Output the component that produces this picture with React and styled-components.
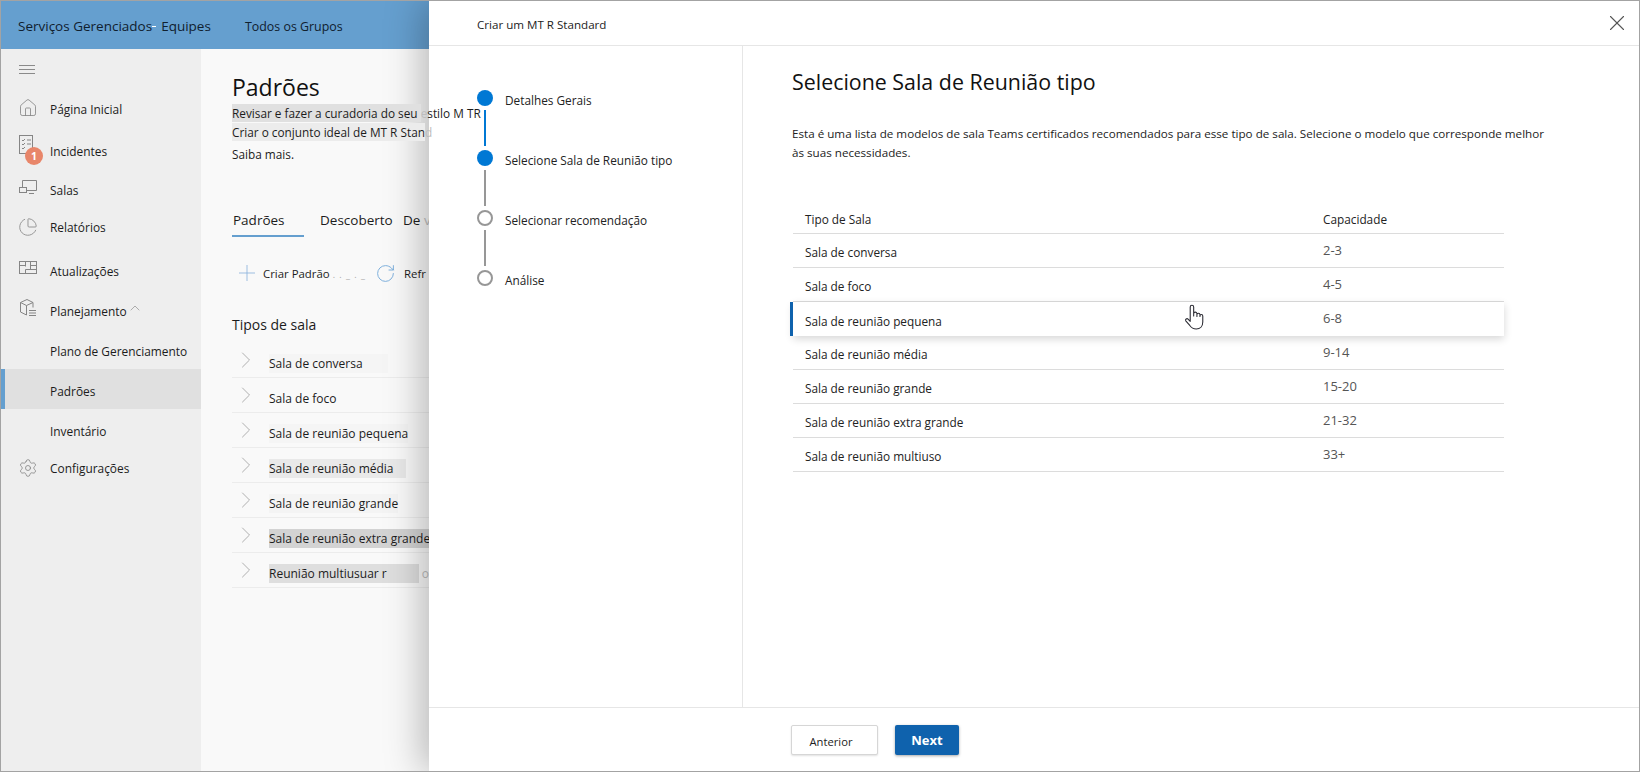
import React from 'react';
import styled, { createGlobalStyle } from 'styled-components';
import { Home, PieChart, Settings, ChevronRight, ChevronUp, Plus, RotateCw, X } from 'lucide-react';

const Global = createGlobalStyle`
    html, body { margin: 0; padding: 0; background: #fff; }
    * { box-sizing: border-box; }
    body { font-family: "Open Sans", "Noto Sans", sans-serif; color: #1c1c1c; }
`;

const Page = styled.div`
    position: relative;
    width: 1640px;
    height: 772px;
    overflow: hidden;
    display: flex;
    flex-direction: column;
    border: 1px solid #a3a3a3;
`;

const TopBar = styled.header`
    flex: 0 0 48px;
    background: #659fcf;
    display: flex;
    align-items: center;
    padding: 2px 0 0 17px;
    color: #10202e;
`;

const Brand = styled.span`
    font-size: 13.5px;
    width: 227px;
    & > i {
        display: inline-block;
        width: 4px;
        height: 1px;
        margin: 0 5px 4px 0;
        background: #fff;
    }
`;

const GroupLink = styled.span`
    font-size: 12.4px;
`;

const Body = styled.div`
    flex: 1;
    display: flex;
    min-height: 0;
`;

const Sidebar = styled.nav`
    flex: 0 0 200px;
    background: #eeeeee;
    display: flex;
    flex-direction: column;
`;

const Hamburger = styled.div`
    height: 40px;
    padding: 16px 0 0 18px;
    & span {
        display: block;
        width: 16px;
        height: 1px;
        margin-bottom: 3px;
        background: #8a8a8a;
    }
`;

const NavRow = styled.div`
    position: relative;
    height: ${ props => props.$sub ? '40px' : '36px' };
    margin-top: ${ props => props.$top || 0 }px;
    display: flex;
    align-items: center;
    padding: 4px 0 0 49px;
    font-size: 11.9px;
    background: ${ props => props.$active ? '#e0e0e0' : 'transparent' };
    border-left: ${ props => props.$active ? '4px solid #659fcf' : 'none' };
    padding-left: ${ props => props.$active ? '45px' : '49px' };
    & > svg.nav-icon {
        position: absolute;
        left: 17px;
        top: ${ props => props.$iconTop ?? 9 }px;
        color: #858585;
    }
`;

const Caret = styled(ChevronUp)`
    margin: -6px 0 0 0;
    color: #8a8a8a;
`;

const Badge = styled.span`
    position: absolute;
    left: 24px;
    top: 16px;
    width: 18px;
    height: 18px;
    border-radius: 50%;
    background: #e8866a;
    color: #fff;
    font-size: 10.5px;
    font-weight: 700;
    display: flex;
    align-items: center;
    justify-content: center;
`;

const Main = styled.main`
    flex: 1;
    background: #f9f9f9;
    padding: 21px 0 0 31px;
    min-width: 0;
`;

const PageTitle = styled.h1`
    margin: 0;
    font-size: 23px;
    font-weight: 400;
    line-height: 34px;
    color: #111;
`;

const Description = styled.p`
    position: relative;
    z-index: 3;
    margin: ${ props => props.$top || 0 }px 0 0;
    font-size: 11.8px;
    line-height: 19px;
    white-space: nowrap;
`;

const Mark = styled.span`
    background: ${ props => props.$tone || 'transparent' };
    padding: ${ props => props.$tone ? '1px' : 0 } ${ props => props.$pad || 0 }px ${ props => props.$tone ? '1px' : 0 } 0;
`;

const Fade = styled.span`
    color: #bdbdbd;
`;

const Tabs = styled.div`
    display: flex;
    margin-top: 44px;
    font-size: 13.5px;
    white-space: nowrap;
`;

const Tab = styled.span`
    height: 29px;
    padding: 3px 0 0 1px;
    width: ${ props => props.$w }px;
`;

const ActiveTab = styled(Tab)`
    border-bottom: 2px solid #659fcf;
    margin-right: 15px;
`;

const Toolbar = styled.div`
    display: flex;
    align-items: center;
    margin-top: 23px;
    padding-left: 2px;
    font-size: 11.4px;
    white-space: nowrap;
    & svg { flex: none; }
`;

const ToolLabel = styled.span`
    margin-left: ${ props => props.$left }px;
    width: ${ props => props.$w }px;
`;

const Dots = styled.span`
    margin-left: 3px;
    letter-spacing: 1px;
    color: #a8a8a8;
    font-size: 9px;
`;

const SectionTitle = styled.h2`
    margin: 29px 0 8px;
    font-size: 14px;
    font-weight: 400;
    line-height: 20px;
`;

const RoomRow = styled.div`
    height: 35px;
    border-bottom: 1px solid #ececec;
    display: flex;
    align-items: center;
    font-size: 12px;
    white-space: nowrap;
    & svg { color: #a9a9a9; flex: none; margin-right: 9px; }
    & > span { margin-top: 6px; }
`;

const Drawer = styled.aside`
    position: absolute;
    z-index: 2;
    left: 428px;
    top: 0;
    right: 0;
    bottom: 0;
    background: #fff;
    display: flex;
    flex-direction: column;
    box-shadow: -6px 0 36px rgba(0, 0, 0, 0.28);
`;

const DrawerHeader = styled.div`
    flex: 0 0 45px;
    border-bottom: 1px solid #e6e6e6;
    display: flex;
    align-items: center;
    justify-content: space-between;
    padding: 3px 9px 0 48px;
    font-size: 11.6px;
    color: #222;
`;

const CloseIcon = styled(X)`
    color: #555;
    margin-top: -4px;
`;

const DrawerBody = styled.div`
    flex: 1;
    display: flex;
    min-height: 0;
`;

const Rail = styled.div`
    flex: 0 0 314px;
    border-right: 1px solid #e6e6e6;
    padding: 44px 0 0 48px;
`;

const Step = styled.div`
    display: flex;
    height: 60px;
    font-size: 11.8px;
    color: #222;
`;

const Marker = styled.div`
    flex: 0 0 16px;
    display: flex;
    flex-direction: column;
    align-items: center;
    margin-right: 12px;
`;

const Dot = styled.span`
    width: 16px;
    height: 16px;
    border-radius: 50%;
    background: ${ props => props.$done ? '#0078d4' : '#fff' };
    border: ${ props => props.$done ? 'none' : '2px solid #979797' };
`;

const Line = styled.span`
    width: 2px;
    height: 36px;
    margin-top: 4px;
    background: ${ props => props.$done ? '#0078d4' : '#979797' };
`;

const StepLabel = styled.span`
    line-height: 18px;
    margin-top: 1px;
`;

const Content = styled.section`
    flex: 1;
    padding: 20px 0 0 49px;
`;

const Heading = styled.h2`
    margin: 0;
    font-size: 21.4px;
    font-weight: 400;
    line-height: 32px;
    color: #111;
`;

const Lead = styled.p`
    margin: 26px 0 0;
    width: 760px;
    font-size: 11.65px;
    line-height: 19px;
    color: #222;
`;

const Table = styled.div`
    margin: 40px 0 0 1px;
    width: 711px;
`;

const TableRow = styled.div`
    position: relative;
    height: 34px;
    display: grid;
    grid-template-columns: 518px 1fr;
    align-items: center;
    padding: 3px 0 0 12px;
    border-bottom: 1px solid #dcdcdc;
    font-size: 11.8px;
    color: #222;
`;

const HeadRow = styled(TableRow)`
    height: 32px;
`;

const SelectedRow = styled(TableRow)`
    border-bottom: none;
    box-shadow: 0 3px 8px rgba(0, 0, 0, 0.16);
    background: #fff;
    &::before {
        content: '';
        position: absolute;
        left: -3px;
        top: 0;
        bottom: 0;
        width: 3px;
        background: #0f62ad;
    }
`;

const Capacity = styled.span`
    font-size: 13px;
    color: #555;
    margin-top: -5px;
`;

const HandCursor = styled.svg`
    position: absolute;
    left: 391px;
    top: 2px;
    color: #2b2b33;
`;

const Footer = styled.div`
    flex: 0 0 64px;
    border-top: 1px solid #e6e6e6;
    display: flex;
    gap: 17px;
    padding: 17px 0 0 362px;
`;

const SecondaryButton = styled.button`
    width: 87px;
    height: 30px;
    background: #fff;
    border: 1px solid #d6d6d6;
    border-radius: 2px;
    box-shadow: 0 1px 2px rgba(0, 0, 0, 0.12);
    font-family: inherit;
    font-size: 11.2px;
    color: #222;
    padding: 3px 7px 0 0;
`;

const PrimaryButton = styled.button`
    width: 64px;
    height: 30px;
    background: #0f62ad;
    border: none;
    border-radius: 2px;
    box-shadow: 0 1px 3px rgba(0, 0, 0, 0.35);
    font-family: inherit;
    font-size: 13px;
    font-weight: 700;
    color: #fff;
`;

const iconProps = { className: 'nav-icon', size: 20, strokeWidth: 1 };

const IncidentsIcon = () => (
    <svg className="nav-icon" width="18" height="22" viewBox="0 0 18 22" fill="none" stroke="currentColor">
        <rect x="1.5" y="1.5" width="13" height="18" />
        <path d="M4 6l1 1 2-2M9 6h4M4 10l1 1 2-2M9 10h4M4 14l1 1 2-2" />
    </svg>
);

const RoomsIcon = () => (
    <svg className="nav-icon" width="20" height="18" viewBox="0 0 20 18" fill="none" stroke="currentColor">
        <path d="M4.5 9V2.5h14v10H9" />
        <rect x="1.5" y="9.5" width="7" height="5" />
        <path d="M11 15.5h5" />
    </svg>
);

const UpdatesIcon = () => (
    <svg className="nav-icon" width="20" height="16" viewBox="0 0 20 16" fill="none" stroke="currentColor">
        <rect x="1.5" y="1.5" width="17" height="12" />
        <path d="M1.5 5.5h6M12.5 5.5h6M7.5 1.5v5M7.5 9.5v4M12.5 1.5v8M7.5 9.5h11" />
    </svg>
);

const PlanningIcon = () => (
    <svg className="nav-icon" width="20" height="20" viewBox="0 0 20 20" fill="none" stroke="currentColor">
        <path d="M2.5 4.5L9 1.5l6 3v5M2.5 4.5v9.5L8.5 17V7.5zM8.5 7.5L15 4.5" />
        <path d="M11 12.5h7M11 15h7M11 17.5h7" />
    </svg>
);

const rooms = [
    { text: 'Sala de conversa', tone: '#f5f5f5', pad: 25 },
    { text: 'Sala de foco' },
    { text: 'Sala de reunião pequena', tone: '#f5f5f5' },
    { text: 'Sala de reunião média', tone: '#e9e9e9', pad: 12 },
    { text: 'Sala de reunião grande', tone: '#f4f4f4' },
    { text: 'Sala de reunião extra grande', tone: '#d3d3d3' },
    { text: 'Reunião multiusuar r', tone: '#dedede', pad: 32, tail: 'o' },
];

const capacities = [
    [ 'Sala de conversa', '2-3' ],
    [ 'Sala de foco', '4-5' ],
    [ 'Sala de reunião pequena', '6-8' ],
    [ 'Sala de reunião média', '9-14' ],
    [ 'Sala de reunião grande', '15-20' ],
    [ 'Sala de reunião extra grande', '21-32' ],
    [ 'Sala de reunião multiuso', '33+' ],
];

const steps = [
    { label: 'Detalhes Gerais', done: true, lineDone: true },
    { label: 'Selecione Sala de Reunião tipo', done: true },
    { label: 'Selecionar recomendação' },
    { label: 'Análise', last: true },
];

function App() {
    return (
        <Page>
            <Global />
            <TopBar>
                <Brand>Serviços Gerenciados<i />Equipes</Brand>
                <GroupLink>Todos os Grupos</GroupLink>
            </TopBar>
            <Body>
                <Sidebar>
                    <Hamburger><span /><span /><span /></Hamburger>
                    <NavRow><Home { ...iconProps } />Página Inicial</NavRow>
                    <NavRow $top={ 6 } $iconTop={ 3 }>
                        <IncidentsIcon />
                        <Badge>1</Badge>
                        Incidentes
                    </NavRow>
                    <NavRow $top={ 3 } $iconTop={ 8 }><RoomsIcon />Salas</NavRow>
                    <NavRow $top={ 1 } $iconTop={ 10 }><PieChart { ...iconProps } />Relatórios</NavRow>
                    <NavRow $top={ 8 } $iconTop={ 9 }><UpdatesIcon />Atualizações</NavRow>
                    <NavRow $top={ 4 } $iconTop={ 7 }>
                        <PlanningIcon />
                        Planejamento
                        <Caret size={ 16 } strokeWidth={ 1 } />
                    </NavRow>
                    <NavRow $sub $top={ 2 }>Plano de Gerenciamento</NavRow>
                    <NavRow $sub $active>Padrões</NavRow>
                    <NavRow $sub>Inventário</NavRow>
                    <NavRow $top={ -1 } $iconTop={ 10 }><Settings { ...iconProps } />Configurações</NavRow>
                </Sidebar>
                <Main>
                    <PageTitle>Padrões</PageTitle>
                    <Description>
                        <Mark $tone="#e0e0e0">Revisar e fazer a curadoria do seu </Mark><Fade>e</Fade>stilo M TR
                    </Description>
                    <Description>
                        <Mark $tone="#ececec">Criar o conjunto ideal de MT R Stan</Mark><Fade>d</Fade>
                    </Description>
                    <Description $top={ 3 }>Saiba mais.</Description>
                    <Tabs>
                        <ActiveTab $w={ 72 }>Padrões</ActiveTab>
                        <Tab $w={ 83 }>Descoberto</Tab>
                        <Tab $w={ 27 }>De <Fade>v</Fade></Tab>
                    </Tabs>
                    <Toolbar>
                        <Plus size={ 26 } strokeWidth={ 0.8 } color="#8db4dc" />
                        <ToolLabel $left={ 3 } $w={ 112 }>Criar Padrão<Dots>. . _ . _</Dots></ToolLabel>
                        <RotateCw size={ 21 } strokeWidth={ 1 } color="#6ea6d8" />
                        <ToolLabel $left={ 8 } $w={ 30 }>Refr</ToolLabel>
                    </Toolbar>
                    <SectionTitle>Tipos de sala</SectionTitle>
                    { rooms.map( ( room ) => (
                        <RoomRow key={ room.text }>
                            <ChevronRight size={ 28 } strokeWidth={ 0.8 } />
                            <span>
                                <Mark $tone={ room.tone } $pad={ room.pad }>{ room.text }</Mark>
                                { room.tail && <Fade> { room.tail }</Fade> }
                            </span>
                        </RoomRow>
                    ) ) }
                </Main>
            </Body>
            <Drawer>
                <DrawerHeader>
                    <span>Criar um MT R Standard</span>
                    <CloseIcon size={ 26 } strokeWidth={ 1 } />
                </DrawerHeader>
                <DrawerBody>
                    <Rail>
                        { steps.map( ( step ) => (
                            <Step key={ step.label }>
                                <Marker>
                                    <Dot $done={ step.done } />
                                    { !step.last && <Line $done={ step.lineDone } /> }
                                </Marker>
                                <StepLabel>{ step.label }</StepLabel>
                            </Step>
                        ) ) }
                    </Rail>
                    <Content>
                        <Heading>Selecione Sala de Reunião tipo</Heading>
                        <Lead>
                            Esta é uma lista de modelos de sala Teams certificados recomendados para esse tipo de sala. Selecione o modelo que corresponde melhor às suas necessidades.
                        </Lead>
                        <Table>
                            <HeadRow><span>Tipo de Sala</span><span>Capacidade</span></HeadRow>
                            { capacities.map( ( [ name, size ] ) => {
                                const Row = size === '6-8' ? SelectedRow : TableRow;
                                return (
                                    <Row key={ name }>
                                        <span>{ name }</span>
                                        <Capacity>{ size }</Capacity>
                                        { size === '6-8' && (
                                            <HandCursor width="20" height="26" viewBox="0 0 18 24" fill="#fff" stroke="currentColor" strokeWidth="1" strokeLinecap="round" strokeLinejoin="round">
                                                <path d="M5.5 16V2.8a1.6 1.6 0 0 1 3.2 0V11V9a1.5 1.5 0 0 1 3 0v2.5V10a1.4 1.4 0 0 1 2.8 0v1.5V11a1.3 1.3 0 0 1 2.6 0v5.5c0 4-2.5 6.5-6 6.5-3 0-4.5-1-6-3.2L1.4 15.5c-.8-1.2 1-2.6 2.1-1.6L5.5 16" />
                                            </HandCursor>
                                        ) }
                                    </Row>
                                );
                            } ) }
                        </Table>
                    </Content>
                </DrawerBody>
                <Footer>
                    <SecondaryButton>Anterior</SecondaryButton>
                    <PrimaryButton>Next</PrimaryButton>
                </Footer>
            </Drawer>
        </Page>
    );
}

export default App;
